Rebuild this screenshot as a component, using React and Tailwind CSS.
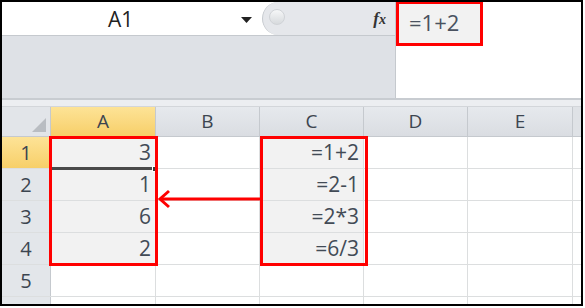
import React from "react";

const cols = ["A", "B", "C", "D", "E"];
const colW = ["w-[105px]", "w-[104px]", "w-[104px]", "w-[104px]", "w-[105px]"];

const data = {
  1: { A: "3", C: "=1+2" },
  2: { A: "1", C: "=2-1" },
  3: { A: "6", C: "=2*3" },
  4: { A: "2", C: "=6/3" },
  5: {},
  6: {},
};

const font = { fontFamily: "'Open Sans', 'Noto Sans', sans-serif" };

function HeaderRow() {
  return (
    <div className="flex h-[30px] shrink-0 border-b border-[#c5c9ce]">
      <div className="w-[49px] shrink-0 bg-[#e2e5e9] border-r border-[#c5c9ce] relative">
        <div className="absolute right-[4px] bottom-[4px] w-0 h-0 border-l-[14px] border-l-transparent border-b-[14px] border-b-[#b9bdc2]" />
      </div>
      {cols.map((c, i) => (
        <div
          key={c}
          className={`${colW[i]} shrink-0 flex items-center justify-center text-[19px] text-[#3c4550] border-r border-[#c5c9ce] ${
            c === "A" ? "bg-gradient-to-b from-[#fde396] to-[#f7cf68]" : "bg-gradient-to-b from-[#e6e9ed] to-[#dadde2]"
          }`}
        >
          {c}
        </div>
      ))}
      <div className="flex-1 bg-[#dfe2e6]" />
    </div>
  );
}

function Row({ n }) {
  const row = data[n];
  return (
    <div className="flex h-[32px] shrink-0 border-b border-[#dcdedf]">
      <div
        className={`w-[49px] shrink-0 flex items-center justify-center text-[20px] text-[#3c4550] border-r border-[#c5c9ce] ${
          n === 1 ? "bg-gradient-to-b from-[#fde396] to-[#f7cf68]" : "bg-[#e3e6ea]"
        }`}
      >
        {n <= 5 ? n : ""}
      </div>
      {cols.map((c, i) => {
        const v = row[c];
        const shaded = (c === "A" || c === "C") && n <= 4;
        return (
          <div
            key={c}
            className={`${colW[i]} shrink-0 flex items-end justify-end pr-[4px] pb-[1px] text-[21px] leading-[30px] text-[#424b56] border-r border-[#dcdedf] ${
              shaded ? "bg-[#f2f2f2]" : "bg-white"
            }`}
          >
            {v}
          </div>
        );
      })}
      <div className="flex-1 bg-white" />
    </div>
  );
}

export default function App() {
  return (
    <div className="w-[585px] h-[308px] bg-white" style={font}>
      <div className="w-[583px] h-[306px] border-2 border-black flex flex-col overflow-hidden bg-white">
        <div className="flex h-[96px] shrink-0">
          <div className="w-[393px] shrink-0 flex flex-col">
            <div className="flex h-[34px] shrink-0 border-b border-[#c5c9ce]">
              <div className="w-[260px] shrink-0 bg-white flex items-center relative">
                <span className="absolute left-[106px] top-[2px] text-[21px] text-[#222]">A1</span>
                <svg className="absolute left-[239px] top-[15px]" width="11" height="7" viewBox="0 0 11 7">
                  <path d="M0 0 H11 L5.5 6 Z" fill="#222" />
                </svg>
              </div>
              <div className="flex-1 bg-[#e5e7eb] rounded-l-[20px] border-l border-[#c5c9ce] flex items-center relative">
                <div className="absolute left-[6px] top-[7px] w-[16px] h-[16px] rounded-full bg-gradient-to-b from-[#f6f7f8] to-[#d7dadd] border border-[#d0d3d7]" />
                <span className="absolute right-[9px] top-[4px] text-[17px] italic font-bold text-[#333]" style={{ fontFamily: "'Liberation Serif', serif" }}>
                  f<span className="text-[14px]">x</span>
                </span>
              </div>
            </div>
            <div className="flex-1 bg-[#dee1e6]" />
          </div>
          <div className="w-px bg-[#c5c9ce]" />
          <div className="flex-1 bg-white relative">
            <div className="absolute left-0 top-[-1px] w-[87px] h-[45px] border-[3px] border-[#ff0000] bg-[#f2f2f2] flex items-center pl-[10px] pb-[2px] text-[22px] text-[#4a5260]">
              =1+2
            </div>
          </div>
        </div>
        <div className="h-[9px] shrink-0 bg-[#eceef1] border-t-[2px] border-[#c8ccd1] border-b border-b-[#d3d6da]" />
        <div className="flex-1 flex flex-col relative">
          <HeaderRow />
          {[1, 2, 3, 4, 5, 6].map((n) => (
            <Row key={n} n={n} />
          ))}
          {/* selected cell A1 */}
          <div className="absolute left-[49px] top-[30px] w-[104px] h-[33px] border-b-[3px] border-[#4a4a4a]" />
          <div className="absolute left-[150px] top-[59px] w-[6px] h-[6px] bg-[#3a3a3a] border border-white" />
          {/* red boxes */}
          <div className="absolute left-[47px] top-[29px] w-[109px] h-[130px] border-[3px] border-[#ff0000]" />
          <div className="absolute left-[258px] top-[29px] w-[108px] h-[130px] border-[3px] border-[#ff0000]" />
          <svg className="absolute left-[150px] top-[82px]" width="112" height="20" viewBox="0 0 112 20">
            <path d="M110 10 H9" stroke="#ff0000" strokeWidth="3" fill="none" />
            <path d="M17 2 L8 10 L17 18" stroke="#ff0000" strokeWidth="3" fill="none" />
          </svg>
        </div>
      </div>
    </div>
  );
}
